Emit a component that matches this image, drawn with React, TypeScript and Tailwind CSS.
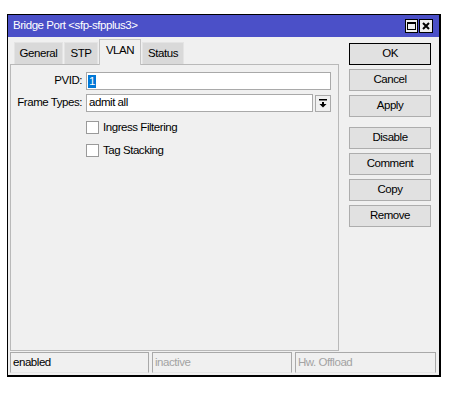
import { useState } from "react";

const tabs = [
  { label: "General", width: "w-[49px]" },
  { label: "STP", width: "w-[34px]" },
  { label: "VLAN", width: "w-[42px]" },
  { label: "Status", width: "w-[42px]" },
];

const actions = [
  { label: "OK", primary: true },
  { label: "Cancel" },
  { label: "Apply" },
  { label: "Disable", spaced: true },
  { label: "Comment" },
  { label: "Copy" },
  { label: "Remove" },
];

function CheckRow({ label }: { label: string }) {
  const [checked, setChecked] = useState(false);
  return (
    <label className="flex items-center h-[13px] cursor-default">
      <input
        type="checkbox"
        checked={checked}
        onChange={() => setChecked(!checked)}
        className="appearance-none w-[13px] h-[13px] bg-white border border-[#9a9a9a] checked:bg-[#0078d7]"
      />
      <span className="ml-[4px]">{label}</span>
    </label>
  );
}

export default function App() {
  const [tab, setTab] = useState("VLAN");

  return (
    <div className="w-[452px] h-[393px] bg-white pt-[14px] pl-[7px] font-['Liberation_Sans',Arial,sans-serif] text-[11.5px] tracking-[-0.45px] text-black">
      <div className="w-[434px] h-[363px] flex flex-col bg-[#f0f0f0] border-black border-t border-l border-r-2 border-b-2">
        {/* Title bar */}
        <div className="h-[22px] flex items-center bg-[#4b50c8] pl-[5px] pr-[6px]">
          <span className="text-white">Bridge Port &lt;sfp-sfpplus3&gt;</span>
          <div className="ml-auto flex gap-[1px]">
            <button
              type="button"
              className="w-[13px] h-[14px] flex items-center justify-center bg-[#f0f0f0] border border-black"
            >
              <span className="w-[9px] h-[8px] border border-black border-t-2" />
            </button>
            <button
              type="button"
              className="w-[14px] h-[14px] flex items-center justify-center bg-[#f0f0f0] border border-black"
            >
              <svg width="8" height="8" viewBox="0 0 8 8">
                <path d="M1 1L7 7M7 1L1 7" stroke="black" strokeWidth="2" />
              </svg>
            </button>
          </div>
        </div>

        {/* Body */}
        <div className="flex pt-[2px] pl-[2px]">
          <div className="w-[329px] flex flex-col">
            <div className="h-[25px] flex items-end gap-[1px] pl-[4px]">
              {tabs.map((t) =>
                t.label === tab ? (
                  <button
                    type="button"
                    key={t.label}
                    onClick={() => setTab(t.label)}
                    className={`${t.width} h-[26px] -mb-px relative z-10 bg-[#f0f0f0] border-x border-t border-[#c4c4c4] pb-[4px]`}
                  >
                    {t.label}
                  </button>
                ) : (
                  <button
                    type="button"
                    key={t.label}
                    onClick={() => setTab(t.label)}
                    className={`${t.width} h-[22px] bg-[#d9d9d9] border-x border-t border-[#e4e4e4] pt-[1px]`}
                  >
                    {t.label}
                  </button>
                ),
              )}
            </div>

            <div className="h-[287px] border border-[#b9b9b9] pt-[7px]">
              <div className="flex items-center">
                <span className="w-[71px] text-right">PVID:</span>
                <div className="ml-[4px] w-[245px] h-[18px] bg-white border border-[#a9a9a9] flex items-center pl-[1px]">
                  <span className="bg-[#0078d7] text-white px-[1px] leading-[13px]">1</span>
                </div>
              </div>
              <div className="flex items-center mt-[4px]">
                <span className="w-[71px] text-right">Frame Types:</span>
                <div className="ml-[4px] w-[227px] h-[18px] bg-white border border-[#a9a9a9] flex items-center pl-[2px]">
                  admit all
                </div>
                <button
                  type="button"
                  className="ml-[2px] w-[16px] h-[17px] border border-[#a9a9a9] bg-[#f0f0f0] flex items-center justify-center"
                >
                  <svg width="8" height="9" viewBox="0 0 8 9">
                    <rect x="0" y="0" width="8" height="1.5" fill="black" />
                    <path d="M3 3H5V5H7.5L4 8.5L0.5 5H3Z" fill="black" />
                  </svg>
                </button>
              </div>
              <div className="ml-[75px] mt-[9px] flex flex-col gap-[10px]">
                <CheckRow label="Ingress Filtering" />
                <CheckRow label="Tag Stacking" />
              </div>
            </div>
          </div>

          <div className="ml-[10px] w-[82px] pt-[4px] flex flex-col gap-[4px]">
            {actions.map((a) => (
              <button
                type="button"
                key={a.label}
                className={`h-[22px] bg-[#e1e1e1] border ${
                  a.primary ? "border-black" : "border-[#adadad]"
                } ${a.spaced ? "mt-[6px]" : ""}`}
              >
                {a.label}
              </button>
            ))}
          </div>
        </div>

        {/* Status bar */}
        <div className="flex gap-[3px] pl-[2px] mt-[1px]">
          <div className="w-[139px] h-[21px] border border-[#a9a9a9] border-b-[#e6e6e6] flex items-center pl-[2px]">
            enabled
          </div>
          <div className="w-[140px] h-[21px] border border-[#a9a9a9] border-b-[#e6e6e6] flex items-center pl-[2px] text-[#a3a3a3]">
            inactive
          </div>
          <div className="w-[141px] h-[21px] border border-[#a9a9a9] border-b-[#e6e6e6] flex items-center pl-[2px] text-[#a3a3a3]">
            Hw. Offload
          </div>
        </div>
      </div>
    </div>
  );
}
